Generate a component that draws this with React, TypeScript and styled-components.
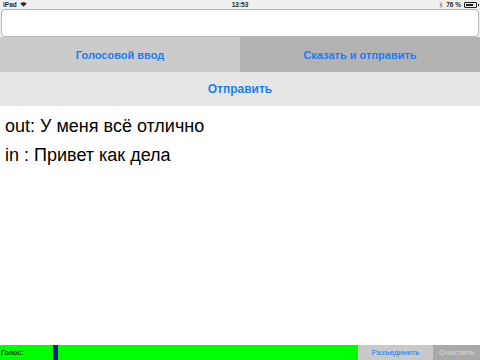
import styled, { createGlobalStyle } from "styled-components";

const GlobalStyle = createGlobalStyle`
  html, body {
    margin: 0;
    padding: 0;
    background: #ffffff;
  }
  body {
    font-family: "Liberation Sans", Arial, sans-serif;
  }
`;

const Screen = styled.div`
  width: 480px;
  height: 360px;
  display: flex;
  flex-direction: column;
  background: #ffffff;
  overflow: hidden;
`;

const StatusBar = styled.div`
  height: 9px;
  background: #efefef;
  display: grid;
  grid-template-columns: 1fr auto 1fr;
  align-items: center;
  padding: 0 3px;
  font-size: 6.5px;
  font-weight: 700;
  color: #2a2a2a;
`;

const StatusSide = styled.div<{ $right?: boolean }>`
  display: flex;
  align-items: center;
  gap: 3px;
  justify-content: ${(p) => (p.$right ? "flex-end" : "flex-start")};
`;

const Battery = styled.div`
  width: 11px;
  height: 4px;
  border: 1px solid #222;
  border-radius: 1px;
  position: relative;
  &::before {
    content: "";
    position: absolute;
    left: 1px;
    top: 1px;
    width: 7px;
    height: 2px;
    background: #222;
  }
  &::after {
    content: "";
    position: absolute;
    right: -3px;
    top: 1px;
    width: 1px;
    height: 2px;
    background: #222;
  }
`;

const InputWrap = styled.div`
  padding: 0 1px;
  background: #efefef;
`;

const TextField = styled.div`
  height: 26px;
  background: #ffffff;
  border: 1px solid #b9b9b9;
  border-radius: 4px;
`;

const ButtonRow = styled.div`
  display: flex;
  height: 35px;
`;

const Button = styled.div<{ $bg: string; $size?: number }>`
  flex: 1;
  display: flex;
  align-items: center;
  justify-content: center;
  background: ${(p) => p.$bg};
  color: #1b7ef4;
  font-weight: 700;
  font-size: ${(p) => p.$size ?? 11}px;
`;

const SendRow = styled(ButtonRow)`
  height: 34px;
`;

const Log = styled.div`
  flex: 1;
  padding: 6px 5px 0;
  display: flex;
  flex-direction: column;
`;

const Line = styled.div`
  font-size: 18px;
  line-height: 29px;
  color: #000000;
`;

const BottomBar = styled.div`
  height: 15px;
  display: flex;
  align-items: stretch;
  font-size: 7px;
`;

const VoiceMeter = styled.div`
  width: 358px;
  background: #00ff00;
  display: flex;
  align-items: center;
  padding-left: 1px;
  box-sizing: border-box;
  position: relative;
  color: #1a3a1a;
  font-weight: 700;
`;

const Level = styled.div`
  position: absolute;
  top: 0;
  bottom: 0;
  width: 5px;
  background: #1a1a8c;
`;

const SmallButton = styled.div<{ $bg: string; $color: string; $width: number }>`
  width: ${(p) => p.$width}px;
  background: ${(p) => p.$bg};
  color: ${(p) => p.$color};
  display: flex;
  align-items: center;
  justify-content: center;
  font-size: 8px;
`;

const Wifi = () => (
  <svg width="7" height="5" viewBox="0 0 7 5">
    <path d="M0.3 1.6 A4.6 4.6 0 0 1 6.7 1.6 L3.5 4.8 Z" fill="#2a2a2a" />
  </svg>
);

const Bluetooth = () => (
  <svg width="4" height="6" viewBox="0 0 4 6">
    <path d="M0.5 1.7 L3.2 4.2 L2 5.4 V0.6 L3.2 1.8 L0.5 4.3" fill="none" stroke="#777" strokeWidth="0.6" />
  </svg>
);

const App = () => {
  const level = 53;
  return (
    <Screen>
      <GlobalStyle />
      <StatusBar>
        <StatusSide>
          <span>iPad</span>
          <Wifi />
        </StatusSide>
        <span>13:53</span>
        <StatusSide $right>
          <Bluetooth />
          <span>76 %</span>
          <Battery />
        </StatusSide>
      </StatusBar>
      <InputWrap>
        <TextField />
      </InputWrap>
      <ButtonRow>
        <Button $bg="#cbcbcb">Голосовой ввод</Button>
        <Button $bg="#b3b3b3">Сказать и отправить</Button>
      </ButtonRow>
      <SendRow>
        <Button $bg="#e6e6e6" $size={12}>
          Отправить
        </Button>
      </SendRow>
      <Log>
        <Line>out: У меня всё отлично</Line>
        <Line>in : Привет как дела</Line>
      </Log>
      <BottomBar>
        <VoiceMeter>
          Голос:
          <Level style={{ left: level }} />
        </VoiceMeter>
        <SmallButton $bg="#c9c9c9" $color="#1b7ef4" $width={75}>
          Разъединить
        </SmallButton>
        <SmallButton $bg="#a9a9a9" $color="#dcdcdc" $width={47}>
          Очистить
        </SmallButton>
      </BottomBar>
    </Screen>
  );
};

export default App;
